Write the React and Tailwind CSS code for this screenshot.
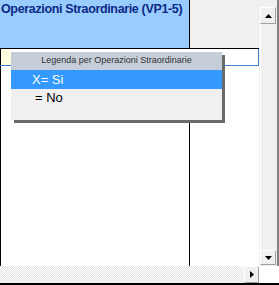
export default function App() {
  const hatch =
    "bg-[repeating-conic-gradient(#e4e4e4_0_25%,#ffffff_0_50%)] bg-[length:2px_2px]";

  return (
    <div className="relative w-[279px] h-[285px] bg-white overflow-hidden font-['Liberation_Sans',Arial,sans-serif]">
      <div className="flex h-[283px]">
        {/* main grid + horizontal scrollbar */}
        <div className="flex flex-col w-[259px]">
          <div className="flex flex-col h-[266px]">
            {/* header */}
            <div className="flex h-[49px] border-b border-black">
              <div className="w-[189px] overflow-hidden bg-[#99ccff] pl-[1px] pt-[2px] text-[12.5px] tracking-[-0.35px] font-bold leading-[15px] text-[#0c2a86] whitespace-nowrap">
                Operazioni Straordinarie (VP1-5)
              </div>
              <div className="w-[1px] bg-black" />
              <div className="flex-1 bg-[#f0f0f0]" />
            </div>
            {/* editing row */}
            <div className="flex h-[17px] border-b border-[#3a7fc8] border-r">
              <div className="w-[1px] bg-black" />
              <div className="w-[10px] bg-[#ffffe0]" />
              <div className="flex-1 bg-white" />
            </div>
            {/* body */}
            <div className="flex flex-1">
              <div className="w-[1px] bg-black" />
              <div className="w-[188px] bg-white" />
              <div className="w-[1px] bg-black" />
              <div className="flex-1 bg-white" />
            </div>
          </div>
          {/* horizontal scrollbar */}
          <div className={`flex h-[17px] ${hatch}`}>
            <div className="flex-1" />
            <div className="w-[15px] bg-[#f0f0f0] border border-[#fff] border-r-[#a0a0a0] border-b-[#a0a0a0] flex items-center justify-center">
              <svg width="4" height="7" viewBox="0 0 4 7">
                <path d="M0 0 L4 3.5 L0 7 Z" fill="#000" />
              </svg>
            </div>
          </div>
        </div>
        {/* vertical scrollbar */}
        <div className="flex flex-col w-[20px]">
          <div className="flex flex-col h-[266px] bg-[#f0f0f0] border-r-2 border-[#808080]">
            <div className="h-[7px]" />
            <div className="h-[17px] mx-[1px] bg-[#f0f0f0] border border-[#fff] border-r-[#a0a0a0] border-b-[#a0a0a0] flex items-center justify-center">
              <svg width="7" height="4" viewBox="0 0 7 4">
                <path d="M0 4 L3.5 0 L7 4 Z" fill="#000" />
              </svg>
            </div>
            <div className="flex-1 mx-[1px] border-l border-[#ffffff]" />
            <div className="h-[15px] mx-[1px] mb-[1px] bg-[#f0f0f0] border border-[#fff] border-r-[#a0a0a0] border-b-[#a0a0a0] flex items-center justify-center">
              <svg width="7" height="4" viewBox="0 0 7 4">
                <path d="M0 0 L3.5 4 L7 0 Z" fill="#000" />
              </svg>
            </div>
          </div>
          <div className="flex-1 bg-white" />
        </div>
      </div>
      <div className="h-[2px] bg-black" />

      {/* legend dropdown */}
      <div className="absolute left-[11px] top-[52px] w-[211px] h-[68px] bg-[#f0f0f0] shadow-[3px_3px_0_#6a6a6a] flex flex-col">
        <div className="h-[18px] bg-[#c5ced8] text-[9px] text-[#333] flex items-center justify-center whitespace-nowrap">
          Legenda per Operazioni Straordinarie
        </div>
        <div className="h-[19px] bg-[#3399ff] text-white text-[13px] pl-[21px] flex items-center">
          X= Si
        </div>
        <div className="h-[18px] text-black text-[13px] pl-[24px] flex items-center">
          = No
        </div>
      </div>
    </div>
  );
}
